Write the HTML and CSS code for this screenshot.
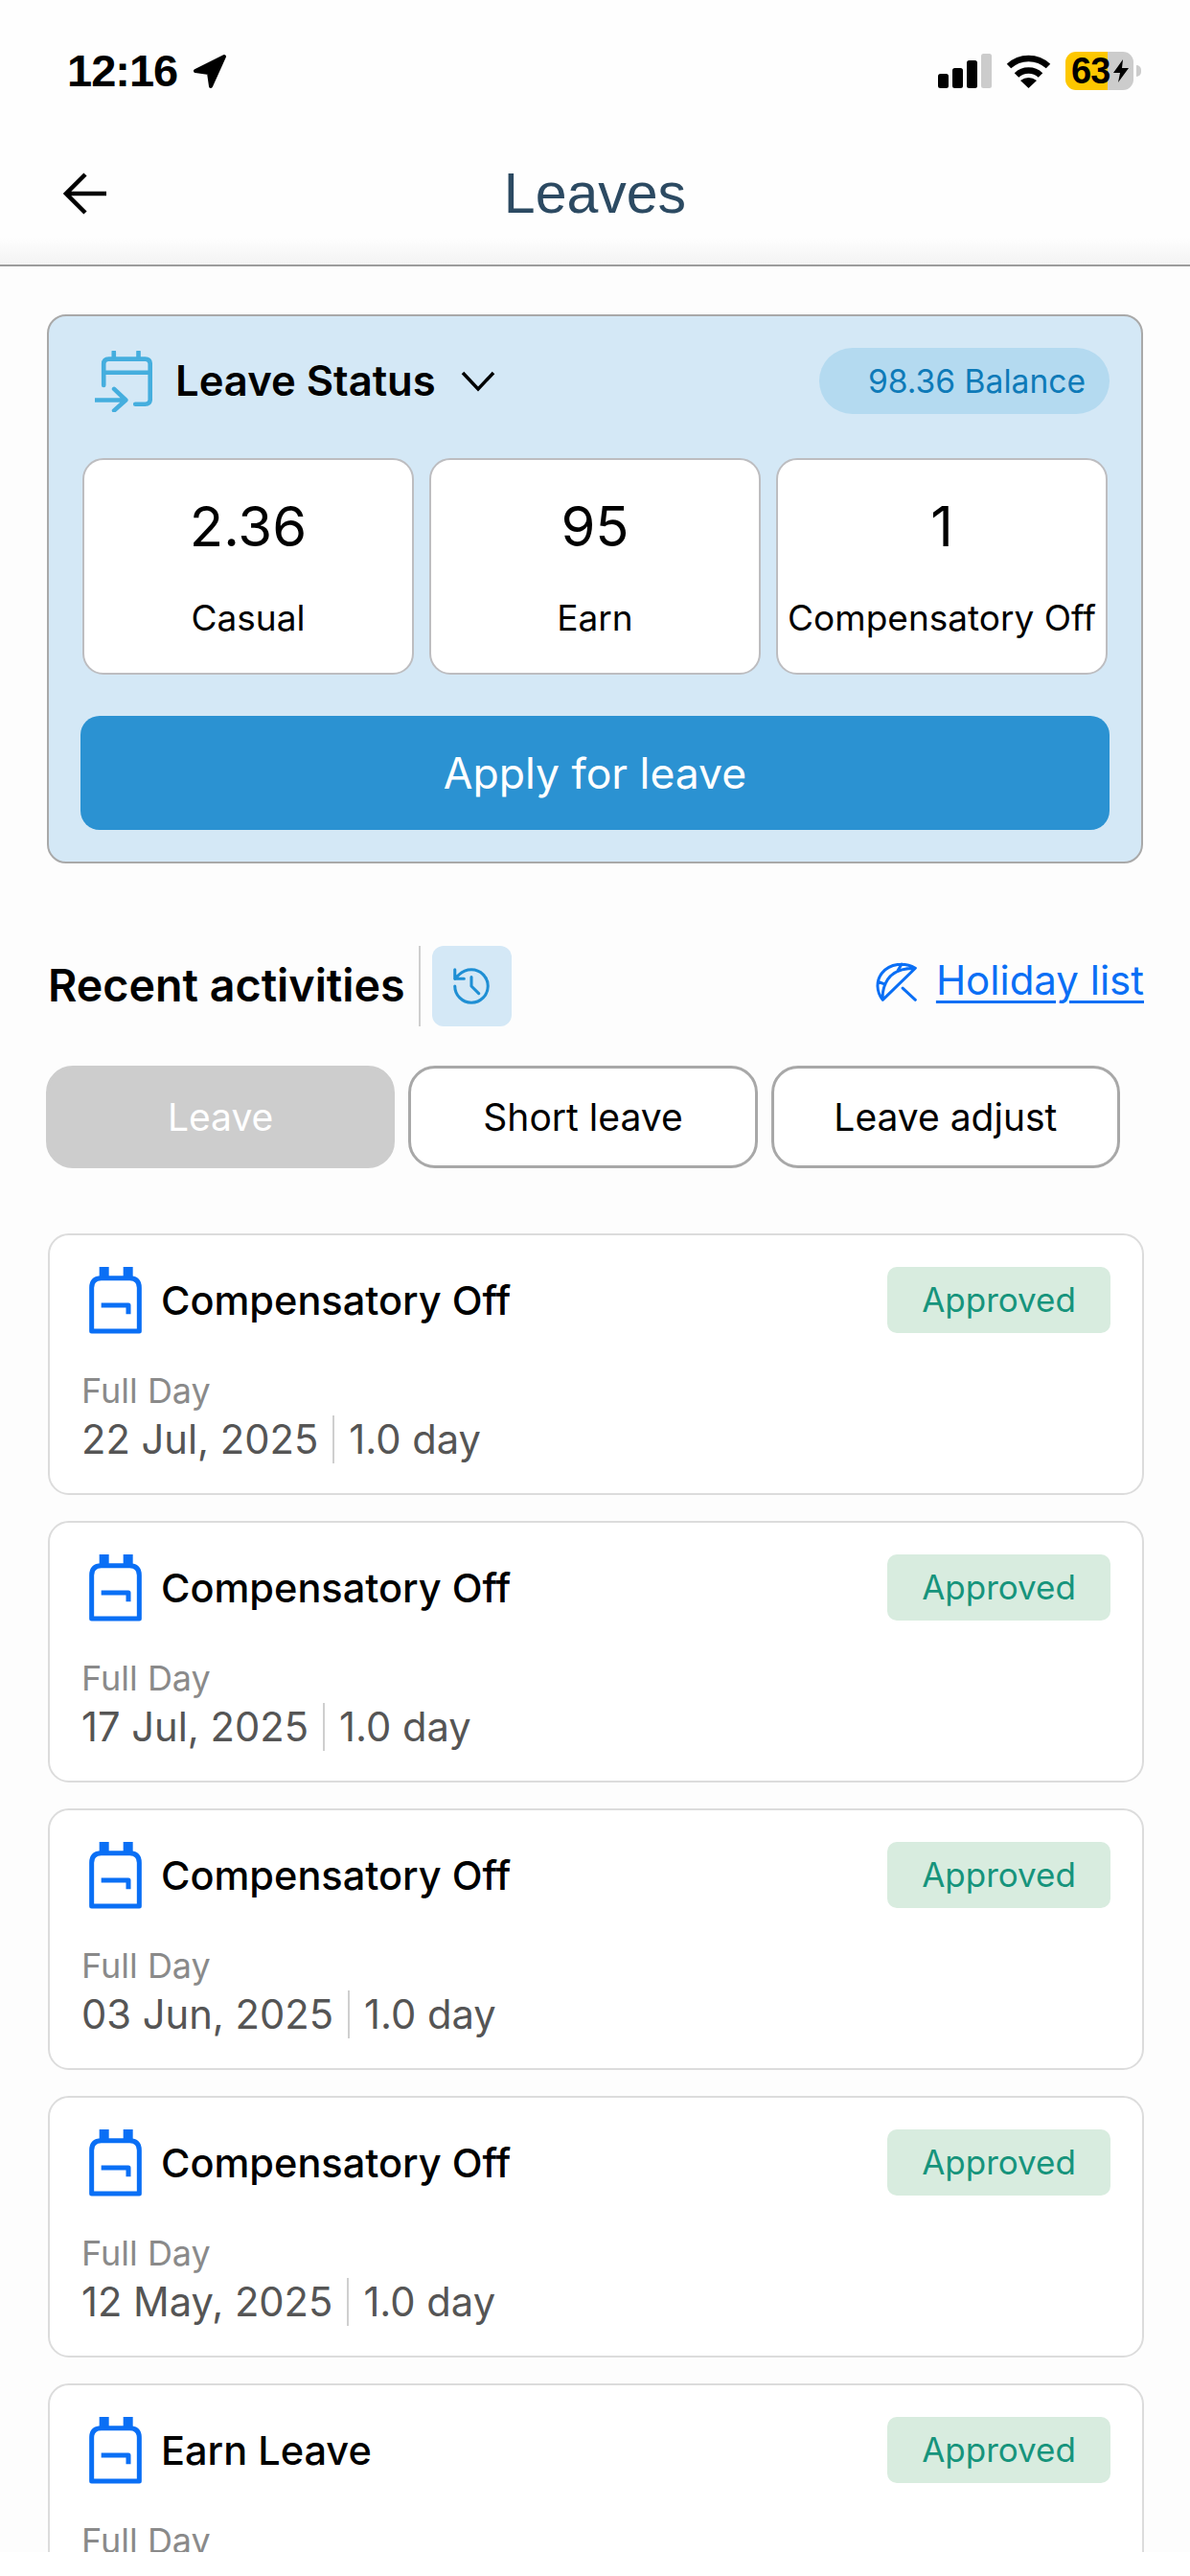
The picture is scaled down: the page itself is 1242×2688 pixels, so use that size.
FILE: index.html
```html
<!DOCTYPE html>
<html lang="en">
<head>
<meta charset="utf-8">
<title>Leaves</title>
<link rel="stylesheet" href="styles.css">
</head>
<body>
<div class="screen">
  <div class="status">
    <div class="status-left">
      <span class="time">12:16</span>
      <svg class="loc" viewBox="0 0 36 36"><path d="M33 3 L3 18 L17 20 L19 34 Z" fill="#000" stroke="#000" stroke-width="4" stroke-linejoin="round"/></svg>
    </div>
    <div class="status-right">
      <svg class="signal" viewBox="0 0 56 36">
        <rect x="0" y="21" width="11" height="15" rx="2.5" fill="#000"/>
        <rect x="15" y="15" width="11" height="21" rx="2.5" fill="#000"/>
        <rect x="30" y="7" width="11" height="29" rx="2.5" fill="#000"/>
        <rect x="45" y="0" width="11" height="36" rx="2.5" fill="#ccc"/>
      </svg>
      <svg class="wifi" viewBox="0 0 47 36">
        <path d="M3 13 A30 30 0 0 1 44 13" fill="none" stroke="#000" stroke-width="6.5"/>
        <path d="M11 22.5 A18 18 0 0 1 36 22.5" fill="none" stroke="#000" stroke-width="6.5"/>
        <path d="M23.5 36 L15 28 Q23.5 22 32 28 Z" fill="#000"/>
      </svg>
      <div class="battery-wrap">
        <div class="battery">
          <span class="batt-num">63</span>
          <svg class="bolt" viewBox="0 0 16 24"><path d="M10 0 L0 14 H7 L5 24 L16 9 H9 Z" fill="#000"/></svg>
        </div>
        <span class="nub"></span>
      </div>
    </div>
  </div>

  <header class="app-bar">
    <svg class="back" viewBox="0 0 46 44"><path d="M23 2 L3 22 L23 42 M3 22 H45" fill="none" stroke="#000" stroke-width="4.5"/></svg>
    <h1 class="title">Leaves</h1>
    <span class="bar-spacer"></span>
  </header>

  <main class="content">
    <section class="panel">
      <div class="panel-head">
        <div class="panel-title">
          <svg class="cal" viewBox="88 76 180 194"><path d="M115 185 V118 Q115 102 131 102 H246 Q262 102 262 118 V230 Q262 245 246 245 H215 M115 145 H262 M147 80 V102 M225 80 V102 M88 232 H185 M148 197 L185 232 L148 265" fill="none" stroke="#45aede" stroke-width="14" stroke-linecap="round" stroke-linejoin="round"/></svg>
          <span class="panel-name">Leave Status</span>
          <svg class="chev" viewBox="0 0 36 22"><path d="M2 2 L18 19 L34 2" fill="none" stroke="#000" stroke-width="3.5"/></svg>
        </div>
        <span class="pill">98.36 Balance</span>
      </div>
      <div class="stats">
        <div class="stat"><span class="stat-num">2.36</span><span class="stat-label">Casual</span></div>
        <div class="stat"><span class="stat-num">95</span><span class="stat-label">Earn</span></div>
        <div class="stat"><span class="stat-num">1</span><span class="stat-label">Compensatory Off</span></div>
      </div>
      <button class="apply">Apply for leave</button>
    </section>

    <div class="recent">
      <div class="recent-left">
        <h2 class="recent-title">Recent activities</h2>
        <span class="recent-div"></span>
        <span class="hist-box">
          <svg class="hist" viewBox="0 0 24 24"><path d="M3 12a9 9 0 1 0 9-9 9.75 9.75 0 0 0-6.74 2.74L3 8 M3 3v5h5 M12 7v5l4 4" fill="none" stroke="#1f8fd4" stroke-width="1.6" stroke-linecap="round" stroke-linejoin="round"/></svg>
        </span>
      </div>
      <div class="holiday">
        <svg class="umbrella" viewBox="30 30 130 130"><path d="M155 55 C120 35 75 40 50 70 C30 95 32 130 52 155 Z M155 55 C120 55 85 65 68 90 C55 110 50 130 52 155 M112 42 L100 62 M38 98 L60 106 M115 118 L155 155" fill="none" stroke="#0a6ff5" stroke-width="9" stroke-linejoin="round" stroke-linecap="round"/></svg>
        <a class="holiday-link">Holiday list</a>
      </div>
    </div>

    <div class="tabs">
      <div class="tab tab-active">Leave</div>
      <div class="tab">Short leave</div>
      <div class="tab">Leave adjust</div>
    </div>

    <div class="cards">
      <article class="card">
        <div class="card-head">
          <div class="card-title">
            <svg class="bag" viewBox="40 40 165 210"><path d="M48 241 V105 Q48 75 78 75 H167 Q197 75 197 105 V241 Z M78 160 H163 V188" fill="none" stroke="#0a6ff5" stroke-width="15" stroke-linejoin="round"/><path d="M72 40 H102 V70 H72 Z M147 40 H177 V70 H147 Z" fill="#0a6ff5"/></svg>
            <span class="card-name">Compensatory Off</span>
          </div>
          <span class="badge">Approved</span>
        </div>
        <div class="card-type">Full Day</div>
        <div class="card-date"><span>22 Jul, 2025</span><i class="sep"></i><span>1.0 day</span></div>
      </article>
      <article class="card">
        <div class="card-head">
          <div class="card-title">
            <svg class="bag" viewBox="40 40 165 210"><path d="M48 241 V105 Q48 75 78 75 H167 Q197 75 197 105 V241 Z M78 160 H163 V188" fill="none" stroke="#0a6ff5" stroke-width="15" stroke-linejoin="round"/><path d="M72 40 H102 V70 H72 Z M147 40 H177 V70 H147 Z" fill="#0a6ff5"/></svg>
            <span class="card-name">Compensatory Off</span>
          </div>
          <span class="badge">Approved</span>
        </div>
        <div class="card-type">Full Day</div>
        <div class="card-date"><span>17 Jul, 2025</span><i class="sep"></i><span>1.0 day</span></div>
      </article>
      <article class="card">
        <div class="card-head">
          <div class="card-title">
            <svg class="bag" viewBox="40 40 165 210"><path d="M48 241 V105 Q48 75 78 75 H167 Q197 75 197 105 V241 Z M78 160 H163 V188" fill="none" stroke="#0a6ff5" stroke-width="15" stroke-linejoin="round"/><path d="M72 40 H102 V70 H72 Z M147 40 H177 V70 H147 Z" fill="#0a6ff5"/></svg>
            <span class="card-name">Compensatory Off</span>
          </div>
          <span class="badge">Approved</span>
        </div>
        <div class="card-type">Full Day</div>
        <div class="card-date"><span>03 Jun, 2025</span><i class="sep"></i><span>1.0 day</span></div>
      </article>
      <article class="card">
        <div class="card-head">
          <div class="card-title">
            <svg class="bag" viewBox="40 40 165 210"><path d="M48 241 V105 Q48 75 78 75 H167 Q197 75 197 105 V241 Z M78 160 H163 V188" fill="none" stroke="#0a6ff5" stroke-width="15" stroke-linejoin="round"/><path d="M72 40 H102 V70 H72 Z M147 40 H177 V70 H147 Z" fill="#0a6ff5"/></svg>
            <span class="card-name">Compensatory Off</span>
          </div>
          <span class="badge">Approved</span>
        </div>
        <div class="card-type">Full Day</div>
        <div class="card-date"><span>12 May, 2025</span><i class="sep"></i><span>1.0 day</span></div>
      </article>
      <article class="card">
        <div class="card-head">
          <div class="card-title">
            <svg class="bag" viewBox="40 40 165 210"><path d="M48 241 V105 Q48 75 78 75 H167 Q197 75 197 105 V241 Z M78 160 H163 V188" fill="none" stroke="#0a6ff5" stroke-width="15" stroke-linejoin="round"/><path d="M72 40 H102 V70 H72 Z M147 40 H177 V70 H147 Z" fill="#0a6ff5"/></svg>
            <span class="card-name">Earn Leave</span>
          </div>
          <span class="badge">Approved</span>
        </div>
        <div class="card-type">Full Day</div>
      </article>
    </div>
  </main>
</div>
</body>
</html>
```
FILE: styles.css
```css
* { box-sizing: border-box; }
html, body { margin: 0; padding: 0; }
body { background: #ffffff; font-family: Inter, "Liberation Sans", sans-serif; color: #000; }
.screen { width: 1242px; height: 2688px; overflow: hidden; }

.status { height: 148px; display: flex; justify-content: space-between; align-items: center; padding: 0 51px 0 70px; background: #fefefe; }
.status-left { display: flex; align-items: center; gap: 16px; }
.time { font-family: "Liberation Sans", sans-serif; font-size: 47px; font-weight: 700; line-height: 48px; letter-spacing: -1px; }
.loc { width: 36px; height: 36px; display: block; }
.status-right { display: flex; align-items: center; gap: 15px; }
.signal { width: 56px; height: 36px; display: block; }
.wifi { width: 47px; height: 36px; display: block; }
.battery-wrap { display: flex; align-items: center; gap: 3px; }
.battery { width: 71px; height: 40px; border-radius: 11px; display: flex; align-items: center; padding-left: 6px; gap: 4px; background: linear-gradient(to right, #fdc700 0, #fdc700 44px, #cccccc 44px); }
.batt-num { font-family: "Liberation Sans", sans-serif; font-size: 38px; font-weight: 700; line-height: 40px; letter-spacing: -1px; }
.bolt { width: 16px; height: 24px; display: block; }
.nub { width: 5px; height: 12px; background: #cccccc; border-radius: 0 6px 6px 0; }

.app-bar { height: 130px; display: grid; grid-template-columns: 1fr auto 1fr; align-items: center; padding: 0 66px 21px; border-bottom: 2px solid #9c9c9c; background: linear-gradient(to bottom, #fefefe 0, #fefefe 78%, #f3f3f3 100%); }
.back { width: 46px; height: 44px; display: block; }
.title { margin: 0; font-family: "Liberation Sans", sans-serif; font-size: 59px; font-weight: 400; line-height: 70px; color: #2c4a62; }

.content { height: 2385px; overflow: hidden; padding: 50px 49px 0; background: #fdfdfd; }
.panel { height: 573px; border: 2px solid #a9a9a9; border-radius: 20px; background: #d4e8f6; padding: 33px; }
.panel-head { height: 69px; display: flex; justify-content: space-between; align-items: center; }
.panel-title { display: flex; align-items: center; margin-left: 15px; }
.cal { width: 60px; height: 64px; display: block; }
.panel-name { margin-left: 24px; font-size: 43.6px; font-weight: 600; line-height: 50px; }
.chev { width: 36px; height: 22px; margin-left: 26px; display: block; }
.pill { height: 69px; padding: 0 25px 0 51px; border-radius: 35px; background: #b4daf0; color: #0e7ab8; font-size: 33.6px; line-height: 69px; }
.stats { display: grid; grid-template-columns: repeat(3, 346px); gap: 16px; margin: 46px 2px 0; }
.stat { height: 226px; border: 2px solid #bdbdc0; border-radius: 22px; background: #fff; display: flex; flex-direction: column; align-items: center; padding-top: 34px; }
.stat-num { font-size: 58px; line-height: 70px; }
.stat-label { margin-top: 39px; font-size: 37px; line-height: 44px; white-space: nowrap; }
.apply { display: block; width: 100%; height: 119px; margin-top: 43px; border: 0; border-radius: 20px; background: #2b92d2; color: #fff; font-family: inherit; font-size: 44.5px; }

.recent { display: flex; justify-content: space-between; align-items: center; height: 84px; margin: 86px -1px 0 1px; }
.recent-left { display: flex; align-items: center; }
.recent-title { margin: 0 0 2px; font-size: 46.6px; font-weight: 600; line-height: 50px; }
.recent-div { width: 2px; height: 84px; margin-left: 14px; background: #cfcfcf; }
.hist-box { width: 83px; height: 84px; margin-left: 12px; border-radius: 12px; background: #d4e8f6; display: flex; align-items: center; justify-content: center; }
.hist { width: 46px; height: 46px; display: block; }
.holiday { display: flex; align-items: center; gap: 20px; margin-bottom: 12px; }
.umbrella { width: 43px; height: 43px; display: block; }
.holiday-link { font-size: 42px; line-height: 48px; color: #0a6ff5; text-decoration: underline; text-decoration-thickness: 3px; text-underline-offset: 6px; }

.tabs { display: grid; grid-template-columns: repeat(3, 1fr); gap: 14px; width: 1121px; margin: 41px 0 0 -1px; }
.tab { height: 107px; border: 3px solid #a8a8a8; border-radius: 28px; background: #fff; display: flex; align-items: center; justify-content: center; font-size: 39px; }
.tab-active { border-color: #cdcdcd; background: #cdcdcd; color: #fff; }

.cards { display: flex; flex-direction: column; gap: 27px; margin: 68px -1px 0 1px; }
.card { height: 273px; flex: none; border: 2px solid #dcdcdc; border-radius: 22px; background: #fff; padding: 33px 33px 31px; }
.card-head { height: 69px; display: flex; justify-content: space-between; align-items: flex-start; }
.card-title { display: flex; align-items: center; margin-left: 8px; height: 69px; }
.bag { width: 55px; height: 70px; display: block; flex: none; }
.card-name { margin-left: 20px; font-size: 41.5px; font-weight: 500; line-height: 48px; }
.badge { width: 233px; height: 69px; border-radius: 10px; background: #d8ecdf; color: #16947c; font-size: 35px; line-height: 69px; text-align: center; }
.card-type { margin-top: 40px; font-size: 36px; line-height: 40px; color: #8a8a8a; }
.card-date { display: flex; align-items: center; height: 50px; margin-top: 6px; font-size: 41.7px; line-height: 50px; color: #555; }
.sep { width: 2px; height: 50px; margin: 0 15px; background: #cfcfcf; }
```
